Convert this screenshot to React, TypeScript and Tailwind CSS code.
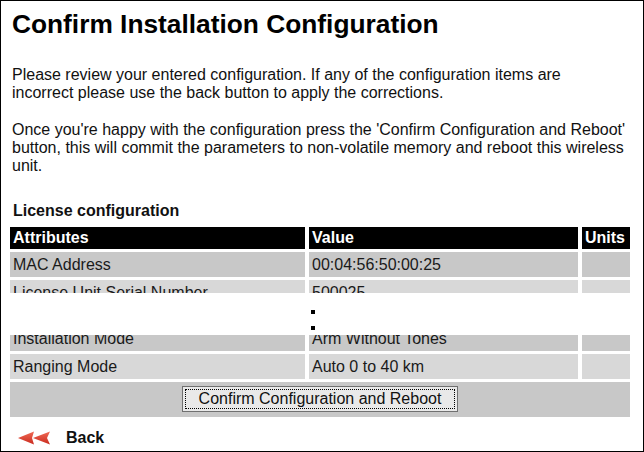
import React from "react";

const font = { fontFamily: '"Liberation Sans", Arial, sans-serif' };

const Row = ({
  label,
  value,
  shade,
}: {
  label: string;
  value: string;
  shade: "dark" | "light";
}) => {
  const bg = shade === "dark" ? "bg-[#c8c8c8]" : "bg-[#d8d8d8]";
  return (
    <div className="flex gap-[4px] h-[25px] text-[16px] leading-[25px] text-[#1a1a1a]">
      <div className={`w-[295px] pl-[3px] ${bg}`}>{label}</div>
      <div className={`w-[269px] pl-[3px] ${bg}`}>{value}</div>
      <div className={`w-[48px] ${bg}`}></div>
    </div>
  );
};

const BackArrows = () => (
  <svg width="34" height="14" viewBox="0 0 34 14">
    <defs>
      <linearGradient id="red" x1="0" y1="0" x2="0" y2="1">
        <stop offset="0" stopColor="#f06a55" />
        <stop offset="1" stopColor="#c92a1e" />
      </linearGradient>
    </defs>
    <path d="M0 7 L16 0.5 L14 7 L16 13.5 Z" fill="url(#red)" />
    <path d="M15 7 L32 0.5 L29 7 L32 13.5 Z" fill="url(#red)" />
  </svg>
);

export default function App() {
  return (
    <div
      className="w-[644px] h-[452px] border border-black bg-white overflow-hidden text-[#111]"
      style={font}
    >
      <h1 className="mt-[8px] pl-[11px] text-[26.3px] leading-[30px] font-bold text-black">
        Confirm Installation Configuration
      </h1>

      <p className="mt-[27px] pl-[11px] pr-[20px] text-[16px] leading-[18px]">
        Please review your entered configuration. If any of the configuration items are
        <br />
        incorrect please use the back button to apply the corrections.
      </p>

      <p className="mt-[19px] pl-[11px] pr-[12px] text-[16px] leading-[18px]">
        Once you're happy with the configuration press the 'Confirm Configuration and Reboot'
        <br />
        button, this will commit the parameters to non-volatile memory and reboot this wireless
        <br />
        unit.
      </p>

      <div className="mt-[27px] pl-[12px] text-[16px] leading-[18px] font-bold">
        License configuration
      </div>

      <div className="ml-[9px] mt-[7px] w-[620px]">
        <div className="h-[66px] overflow-hidden flex flex-col gap-[3px]">
          <div className="flex gap-[4px] h-[22px] text-[16px] leading-[22px] font-bold text-white">
            <div className="w-[295px] pl-[3px] bg-black">Attributes</div>
            <div className="w-[269px] pl-[3px] bg-black">Value</div>
            <div className="w-[48px] pl-[3px] bg-black">Units</div>
          </div>
          <Row label="MAC Address" value="00:04:56:50:00:25" shade="dark" />
          <Row label="License Unit Serial Number" value="500025" shade="light" />
        </div>

        <div className="h-[42px] pl-[301px] pt-[17px] flex flex-col gap-[12px]">
          <div className="w-[4px] h-[4px] bg-black"></div>
          <div className="w-[4px] h-[4px] bg-black"></div>
        </div>

        <div className="overflow-hidden">
          <div className="-mt-[9px] flex flex-col gap-[3px]">
            <Row label="Installation Mode" value="Arm Without Tones" shade="dark" />
            <Row label="Ranging Mode" value="Auto 0 to 40 km" shade="light" />
            <div className="h-[35px] bg-[#c8c8c8] flex items-center justify-center pb-[1px]">
              <button
                className="h-[26px] w-[276px] bg-[#e9e9e9] border border-[#707070] p-[2px] text-[16px] text-[#111]"
                style={font}
              >
                <div className="h-full w-full border border-dotted border-black flex items-center justify-center leading-none">
                  Confirm Configuration and Reboot
                </div>
              </button>
            </div>
          </div>
        </div>
      </div>

      <div className="mt-[12px] pl-[17px] flex items-center gap-[14px] h-[18px]">
        <BackArrows />
        <span className="text-[16px] leading-[18px] font-bold text-[#111]">Back</span>
      </div>
    </div>
  );
}
